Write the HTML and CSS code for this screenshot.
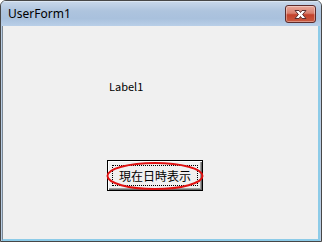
FILE: index.html
```html
<!DOCTYPE html>
<html>
<head>
<meta charset="utf-8">
<link rel="stylesheet" href="styles.css">
</head>
<body>
<div class="window">
  <div class="titlebar">
    <span class="title">UserForm1</span>
    <div class="close">
      <svg width="17" height="11" viewBox="0 0 17 11">
        <path d="M3 1.5 L7 1.5 L8.5 3.5 L10 1.5 L14 1.5 L10.6 5.5 L14 9.5 L10 9.5 L8.5 7.5 L7 9.5 L3 9.5 L6.4 5.5 Z" fill="#ffffff" stroke="#5a3030" stroke-width="1" stroke-linejoin="round"/>
      </svg>
    </div>
  </div>
  <div class="client">
    <div class="label">Label1</div>
    <div class="btn-wrap">
      <div class="button"><span class="focus">現在日時表示</span></div>
      <svg class="mark" width="100" height="32" viewBox="0 0 100 32">
        <ellipse cx="50" cy="15" rx="47.5" ry="13" fill="none" stroke="#e01010" stroke-width="2"/>
      </svg>
    </div>
  </div>
</div>
</body>
</html>
```

FILE: styles.css
```css
html, body {
  margin: 0;
  padding: 0;
  background: #ffffff;
}
.window {
  width: 322px;
  height: 242px;
  box-sizing: border-box;
  border: 1px solid #474747;
  border-radius: 6px 6px 0 0;
  background: #b8cde4;
  display: flex;
  flex-direction: column;
  overflow: hidden;
}
.titlebar {
  height: 25px;
  flex: none;
  display: flex;
  align-items: flex-start;
  justify-content: space-between;
  background: linear-gradient(to bottom, #c9d8ea 0, #aec4de 40%, #a9c1dd 70%, #b9cfe8 100%);
  box-shadow: inset 0 1px 0 #dbe6f2;
}
.title {
  font-family: "Noto Sans", sans-serif;
  font-size: 12px;
  color: #000;
  margin: 5px 0 0 7px;
  line-height: 16px;
}
.close {
  width: 29px;
  height: 16px;
  margin: 4px 5px 0 0;
  border: 1px solid #5b2b2b;
  border-radius: 3px;
  background: linear-gradient(to bottom, #e7a89c 0, #d9806e 45%, #c3422c 55%, #c95a40 100%);
  box-shadow: inset 0 0 0 1px rgba(255,255,255,0.35);
  display: flex;
  align-items: center;
  justify-content: center;
}
.close svg {
  display: block;
}
.client {
  flex: 1;
  margin: 0 1px 0 1px;
  border-left: 1px solid #7c8894;
  border-right: 2px solid #8ccbe8;
  border-bottom: 2px solid #8ccbe8;
  background: #f0f0f0;
  display: flex;
  flex-direction: column;
  align-items: flex-start;
  padding-left: 104px;
  padding-top: 53px;
}
.label {
  font-family: "Noto Sans CJK JP", sans-serif;
  font-size: 11px;
  line-height: 14px;
  color: #000;
  margin-left: 2px;
}
.btn-wrap {
  position: relative;
  margin-top: 67px;
}
.button {
  width: 96px;
  height: 31px;
  box-sizing: border-box;
  border: 1px solid #000;
  background: #f0f0f0;
  box-shadow: inset 1px 1px 0 #ffffff, inset -1px -1px 0 #696969, inset -2px -2px 0 #a0a0a0;
  display: flex;
  padding: 4px;
}
.focus {
  flex: 1;
  border: 1px dotted #000;
  display: flex;
  align-items: center;
  justify-content: center;
  font-family: "Noto Sans CJK JP", sans-serif;
  font-size: 12px;
  color: #000;
}
.mark {
  position: absolute;
  left: -2px;
  top: 1px;
}
```
